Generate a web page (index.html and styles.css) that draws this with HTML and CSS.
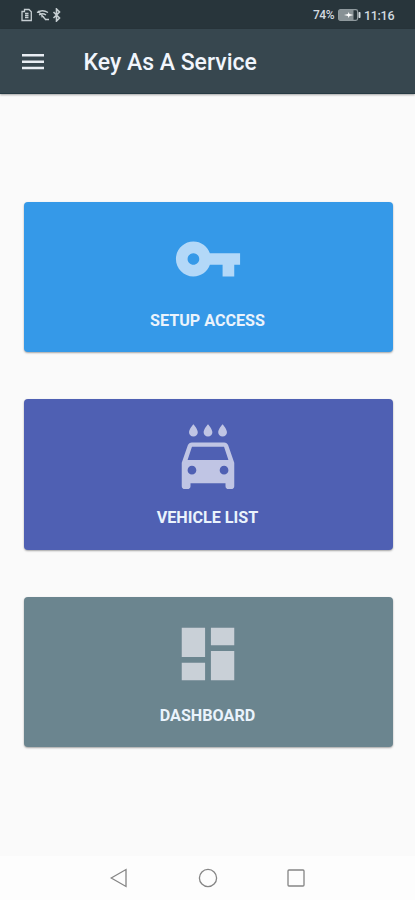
FILE: index.html
```html
<!DOCTYPE html>
<html lang="en">
<head>
<meta charset="utf-8">
<title>Key As A Service</title>
<link rel="stylesheet" href="styles.css">
</head>
<body>
<div class="status">
  <div class="status-left">
    <svg width="42" height="14" viewBox="0 0 42 14" fill="none" stroke="#c6ced2" stroke-width="1.3">
      <path d="M3.500 1.500h4.500l2.300 2.300v8.700H1V3.500h2.500zM4 5.500h3.500M4 7.500h3.500M4 9.500h3.500" />
      <path d="M16 4.500q5.500-3.500 11 0M18 7q3.500-2.500 7 0M20 9q1.500-1.200 3 0M17 3l8 9M24 11.500h4"/>
      <path d="M32.500 4l6 6-3 3V1l3 3-6 6" stroke-width="1.600"/>
    </svg>
  </div>
  <div class="status-right">
    <span class="percent">74%</span>
    <svg width="23" height="12" viewBox="0 0 23 12">
      <rect x=".6" y=".6" width="19" height="10.800" rx="1.800" fill="none" stroke="#8f999d" stroke-width="1.200"/>
      <rect x="1" y="1" width="14.500" height="10" fill="#879195"/>
      <path d="M6 6l4-1 .5-2 1 2 4 1-4 1-1 2-.5-2z" fill="#fff"/>
      <rect x="20.500" y="3" width="2" height="6" rx=".7" fill="#d3dbe0"/>
    </svg>
    <span class="clock">11:16</span>
  </div>
</div>
<header class="appbar">
  <svg class="menu" width="22" height="16" viewBox="0 0 22 16" fill="#e9eef4"><path d="M0 0h22v2.500H0zM0 6.400h22v2.500H0zM0 12.800h22v2.500H0z"/></svg>
  <h1>Key As A Service</h1>
</header>
<main>
  <a class="card access">
    <svg class="icon" viewBox="0 0 24 24"><path d="M12.650 10C11.830 7.670 9.610 6 7 6c-3.310 0-6 2.690-6 6s2.690 6 6 6c2.610 0 4.830-1.670 5.650-4H17v4h4v-4h2v-4H12.650zM7 14c-1.100 0-2-.9-2-2s.9-2 2-2 2 .9 2 2-.9 2-2 2z"/></svg>
    <span class="label">SETUP ACCESS</span>
  </a>
  <a class="card vehicles">
    <svg class="icon" viewBox="0 0 24 24"><path d="M17 5c.83 0 1.500-.67 1.500-1.500 0-1-1.500-2.700-1.500-2.700s-1.500 1.700-1.500 2.700c0 .83.67 1.500 1.500 1.500zm-5 0c.83 0 1.500-.67 1.500-1.500 0-1-1.500-2.700-1.500-2.700s-1.500 1.700-1.500 2.700c0 .83.67 1.500 1.500 1.500zM7 5c.83 0 1.500-.67 1.500-1.500C8.500 2.500 7 .8 7 .8S5.500 2.500 5.500 3.500C5.500 4.330 6.170 5 7 5zm11.920 3.010C18.720 7.420 18.160 7 17.500 7h-11c-.66 0-1.210.42-1.420 1.010L3 14v8c0 .55.45 1 1 1h1c.55 0 1-.45 1-1v-1h12v1c0 .55.45 1 1 1h1c.55 0 1-.45 1-1v-8l-2.080-5.990zM6.500 18c-.83 0-1.500-.67-1.500-1.500S5.670 15 6.500 15s1.500.67 1.500 1.500S7.330 18 6.500 18zm11 0c-.83 0-1.500-.67-1.500-1.500s.67-1.500 1.500-1.500 1.500.67 1.500 1.500-.67 1.500-1.500 1.500zM5 13l1.500-4.500h11L19 13H5z"/></svg>
    <span class="label">VEHICLE LIST</span>
  </a>
  <a class="card dashboard">
    <svg class="icon" viewBox="0 0 24 24"><path d="M3 13h8V3H3v10zm0 8h8v-6H3v6zm10 0h8V11h-8v10zm0-18v6h8V3h-8z"/></svg>
    <span class="label">DASHBOARD</span>
  </a>
</main>
<nav class="navbar">
  <svg width="18" height="20" viewBox="0 0 18 20"><path d="M1.200 10L16 1.500v17z"/></svg>
  <svg width="20" height="20" viewBox="0 0 20 20"><circle cx="10" cy="10" r="8.600"/></svg>
  <svg width="18" height="18" viewBox="0 0 18 18"><rect x="1" y="1" width="16" height="16" rx="1"/></svg>
</nav>
</body>
</html>
```
FILE: styles.css
```css
* { box-sizing: border-box; }
body {
  margin: 0;
  height: 900px;
  display: flex;
  flex-direction: column;
  overflow: hidden;
  background: #fafafa;
  font-family: Roboto, "Liberation Sans", sans-serif;
}
svg { display: block; flex: none; }
.status {
  height: 29px;
  padding: 1px 20px 0 21px;
  display: flex;
  justify-content: space-between;
  align-items: center;
  background: #28353b;
  color: #d3dbe0;
}
.status-right { display: flex; align-items: center; }
.percent { width: 25px; font-size: 12px; font-weight: 500; letter-spacing: -.5px; }
.clock { width: 31px; margin-left: 3px; font-size: 12.500px; font-weight: 500; letter-spacing: -.3px; white-space: nowrap; }
.appbar {
  height: 65px;
  padding: 1px 0 0 22px;
  display: flex;
  align-items: center;
  background: #37474f;
  border-bottom: 1px solid #263a43;
  box-shadow: 0 1px 2px rgba(0, 0, 0, .35);
}
.appbar h1 {
  margin: 3px 0 0 39.500px;
  font-size: 23px;
  line-height: 30px;
  font-weight: 500;
  color: #f1f5fc;
}
main {
  flex: 1;
  padding: 107.500px 22.500px 0 23.500px;
  display: flex;
  flex-direction: column;
  gap: 47px;
}
.card {
  height: 150.500px;
  padding: 22.500px 1px 0 0;
  display: flex;
  flex-direction: column;
  align-items: center;
  flex: none;
  border-radius: 4px;
  box-shadow: 0 1px 2px rgba(0, 0, 0, .35);
}
.access { background: #3599e8; }
.vehicles { background: #4f60b3; }
.dashboard { background: #6b858f; }
.icon { width: 70px; height: 70px; }
.access .icon { fill: #b3d8f8; }
.vehicles .icon { fill: #c0c5e4; }
.dashboard .icon { fill: #c9d0d7; }
.label {
  margin-top: 16.600px;
  font-size: 16.150px;
  line-height: 20px;
  font-weight: 700;
  color: #eaf3fc;
}
.navbar {
  height: 44px;
  padding: 0 110px;
  display: flex;
  justify-content: space-between;
  align-items: center;
  background: #fdfdfd;
}
.navbar svg { fill: none; stroke: #858585; stroke-width: 1.300; }
```
